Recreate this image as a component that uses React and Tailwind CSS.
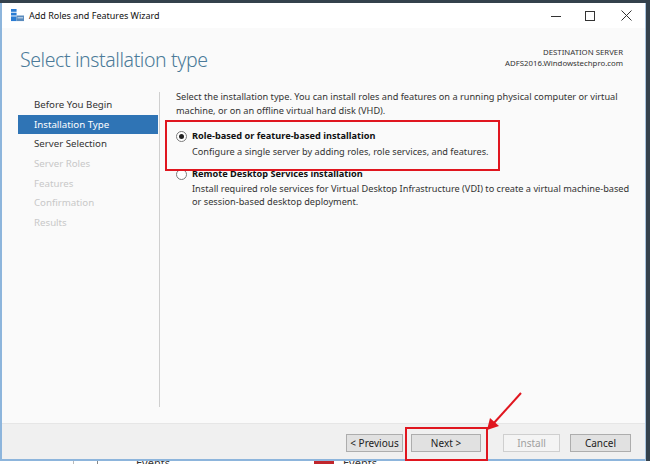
import React from 'react'

const font = { fontFamily: '"Noto Sans", "Open Sans", sans-serif' }

function TitleIcon() {
    return (
        <svg width="15" height="13" viewBox="0 0 16 14">
            <rect x="1" y="0" width="6" height="3" fill="#2b7cd3" />
            <rect x="1" y="4" width="6" height="3" fill="#2b7cd3" />
            <rect x="1" y="8" width="6" height="5" fill="#2b7cd3" />
            <rect x="7" y="7" width="8" height="6" fill="#5a8bbd" />
            <rect x="8" y="9" width="6" height="1" fill="#dfe9f4" />
        </svg>
    )
}

function Radio({ checked }) {
    return (
        <span className="mt-[2px] flex h-[11px] w-[11px] shrink-0 items-center justify-center rounded-full border border-[#7a7a7a] bg-white">
            {checked && <span className="h-[5px] w-[5px] rounded-full bg-[#222]" />}
        </span>
    )
}

export default function App() {
    const steps = [
        { label: 'Before You Begin', state: 'done' },
        { label: 'Installation Type', state: 'active' },
        { label: 'Server Selection', state: 'done' },
        { label: 'Server Roles', state: 'off' },
        { label: 'Features', state: 'off' },
        { label: 'Confirmation', state: 'off' },
        { label: 'Results', state: 'off' },
    ]
    return (
        <div className="relative flex h-[464px] w-[650px] flex-col overflow-hidden bg-[#34414c]" style={font}>
            <div className="h-[3px] shrink-0" />
            <div className="flex h-[458px] shrink-0">
                {/* window */}
                <div className="flex w-[645px] flex-col border-b-2 border-l-2 border-[#8db5dc] bg-[#fafafa]">
                    {/* title bar */}
                    <div className="flex h-[25px] shrink-0 items-center bg-white pl-[8px] text-[9px] text-[#111]">
                        <TitleIcon />
                        <span className="ml-[4px]">Add Roles and Features Wizard</span>
                        <div className="ml-auto flex h-full items-center text-[#222]">
                            <span className="flex w-[34px] justify-center">
                                <span className="mt-[1px] h-px w-[10px] bg-[#333]" />
                            </span>
                            <span className="flex w-[34px] justify-center">
                                <span className="h-[10px] w-[10px] border border-[#333]" />
                            </span>
                            <span className="flex w-[38px] justify-center">
                                <svg width="11" height="11" viewBox="0 0 11 11">
                                    <path d="M0.5 0.5 L10.5 10.5 M10.5 0.5 L0.5 10.5" stroke="#333" strokeWidth="1" />
                                </svg>
                            </span>
                        </div>
                    </div>
                    {/* header */}
                    <div className="flex h-[60px] shrink-0 items-start">
                        <h1 className="ml-[18px] mt-[22px] text-[19.5px] font-light leading-none tracking-[-0.4px] text-[#4b7a99]">Select installation type</h1>
                        <div className="ml-auto mr-[22px] mt-[19px] text-right text-[7.8px] leading-[11px] text-[#333]">
                            <div>DESTINATION SERVER</div>
                            <div>ADFS2016.Windowstechpro.com</div>
                        </div>
                    </div>
                    {/* body */}
                    <div className="flex min-h-0 flex-1">
                        <div className="w-[156px] shrink-0 pl-[16px] pt-[7px]">
                            {steps.map((s) => (
                                <div
                                    key={s.label}
                                    className={
                                        'h-[19.7px] pl-[16px] text-[9.7px] leading-[19.7px] ' +
                                        (s.state === 'active'
                                            ? 'bg-[#2f74b5] text-white'
                                            : s.state === 'done'
                                              ? 'text-[#333]'
                                              : 'text-[#c8c8c8]')
                                    }
                                >
                                    {s.label}
                                </div>
                            ))}
                        </div>
                        <div className="mb-[16px] ml-[1px] mt-[4px] w-px shrink-0 bg-[#cfcfcf]" />
                        <div className="flex-1 pl-[16px] pr-[6px] pt-[2px] text-[9.2px] leading-[13.5px] text-[#333]">
                            <p>Select the installation type. You can install roles and features on a running physical computer or virtual machine, or on an offline virtual hard disk (VHD).</p>
                            <div className="mt-[12px] flex gap-[5px]">
                                <Radio checked />
                                <div>
                                    <div className="font-bold text-[#111]">Role-based or feature-based installation</div>
                                    <div className="mt-[2px]">Configure a single server by adding roles, role services, and features.</div>
                                </div>
                            </div>
                            <div className="mt-[9px] flex gap-[5px]">
                                <Radio />
                                <div>
                                    <div className="font-bold text-[#111]">Remote Desktop Services installation</div>
                                    <div className="mt-[1px]">Install required role services for Virtual Desktop Infrastructure (VDI) to create a virtual machine-based or session-based desktop deployment.</div>
                                </div>
                            </div>
                        </div>
                    </div>
                    {/* footer */}
                    <div className="flex h-[36px] shrink-0 items-center border-t border-[#e6e6e6] bg-[#f0f0f0] pr-[14px] pt-[3px] text-[10px] text-[#222]">
                        <div className="ml-auto flex items-center">
                            <button className="h-[18px] w-[57px] border border-[#adadad] bg-[#e1e1e1]">&lt; Previous</button>
                            <button className="ml-[8px] h-[18px] w-[70px] border border-[#adadad] bg-[#e1e1e1]">Next &gt;</button>
                            <button className="ml-[22px] h-[18px] w-[57px] border border-[#cfcfcf] bg-[#f4f4f4] text-[#a0a0a0]">Install</button>
                            <button className="ml-[10px] h-[18px] w-[61px] border border-[#adadad] bg-[#e1e1e1]">Cancel</button>
                        </div>
                    </div>
                </div>
                <div className="flex-1 border-l border-[#a9c4de]" />
            </div>
            {/* desktop behind, cut off */}
            <div className="flex h-[3px] shrink-0 items-start overflow-hidden bg-white text-[11px] leading-[8px] text-[#333]">
                <span className="ml-[73px] h-[3px] w-px bg-[#bbb]" />
                <span className="ml-[23px] h-[3px] w-px bg-[#888]" />
                <span className="-mt-[2px] ml-[38px] w-[178px]">Events</span>
                <span className="h-[6px] w-[20px] bg-[#c0262d]" />
                <span className="-mt-[2px] ml-[9px]">Events</span>
            </div>

            {/* annotations */}
            <div className="absolute left-[165px] top-[120px] h-[51px] w-[335px] border-2 border-[#e0161f]" />
            <div className="absolute left-[405px] top-[427px] h-[34px] w-[83px] border-2 border-[#e0161f]" />
            <svg className="absolute left-[480px] top-[388px]" width="50" height="50" viewBox="0 0 50 50">
                <path d="M41 5 L13 36" stroke="#e0161f" strokeWidth="2" />
                <path d="M7 42 L10 30 L19 38 Z" fill="#e0161f" />
            </svg>
        </div>
    )
}
